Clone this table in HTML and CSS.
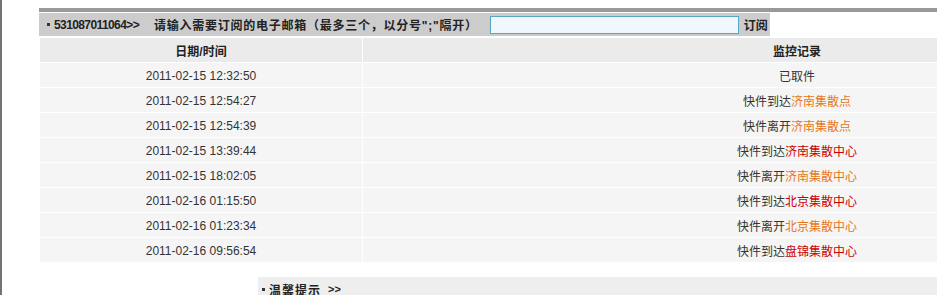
FILE: index.html
```html
<!DOCTYPE html>
<html lang="zh-CN">
<head>
    <meta charset="UTF-8">
    <title>快件跟踪</title>
    <link rel="stylesheet" href="styles.css">
</head>
<body>
    <div class="page">
        <div class="top-line"></div>

        <div class="subscribe">
            <span class="dot"></span>
            <span class="bill-no">531087011064&gt;&gt;</span>
            <span class="prompt">请输入需要订阅的电子邮箱（最多三个，以分号";"隔开）</span>
            <input type="text" class="mail-input">
            <span class="subscribe-btn">订阅</span>
        </div>

        <table class="track">
            <thead>
                <tr>
                    <th class="col-time">日期/时间</th>
                    <th class="col-log">监控记录</th>
                </tr>
            </thead>
            <tbody>
                <tr><td>2011-02-15 12:32:50</td><td>已取件</td></tr>
                <tr><td>2011-02-15 12:54:27</td><td>快件到达<span class="site">济南集散点</span></td></tr>
                <tr><td>2011-02-15 12:54:39</td><td>快件离开<span class="site">济南集散点</span></td></tr>
                <tr><td>2011-02-15 13:39:44</td><td>快件到达<span class="hub">济南集散中心</span></td></tr>
                <tr><td>2011-02-15 18:02:05</td><td>快件离开<span class="site">济南集散中心</span></td></tr>
                <tr><td>2011-02-16 01:15:50</td><td>快件到达<span class="hub">北京集散中心</span></td></tr>
                <tr><td>2011-02-16 01:23:34</td><td>快件离开<span class="site">北京集散中心</span></td></tr>
                <tr><td>2011-02-16 09:56:54</td><td>快件到达<span class="hub">盘锦集散中心</span></td></tr>
            </tbody>
        </table>

        <div class="tips">
            <span class="dot"></span>
            <span class="tips-title">温馨提示</span>
            <span class="tips-arrow">&gt;&gt;</span>
        </div>
    </div>
</body>
</html>
```

FILE: styles.css
```css
html, body {
    margin: 0;
    padding: 0;
    overflow: hidden;
    background: #fff;
}

body {
    font-family: "Liberation Sans", "Noto Sans CJK SC", sans-serif;
    font-size: 12px;
    color: #333;
}

.page {
    border-left: 2px solid #737373;
    height: 100vh;
    padding: 8px 0 0 37px;
    box-sizing: border-box;
    width: 1300px;
}

.top-line {
    height: 4px;
    background-color: #999;
    margin-bottom: 1px;
}

.dot {
    display: inline-block;
    width: 3px;
    height: 3px;
    background-color: #333;
}

/* subscription bar */
.subscribe {
    display: inline-flex;
    align-items: center;
    height: 23px;
    padding: 0 2px 0 8px;
    background-color: #ccc;
    font-weight: bold;
    color: #222;
    vertical-align: top;
}

.subscribe .dot {
    margin-right: 4px;
}

.bill-no {
    font-size: 12px;
    letter-spacing: -0.6px;
}

.prompt {
    margin-left: 15px;
    letter-spacing: 0.75px;
    white-space: nowrap;
}

.mail-input {
    margin: 0 0 0 12px;
    width: 249px;
    height: 18px;
    box-sizing: border-box;
    border: 1px solid #5aa5c6;
    background-color: #f0f8fd;
    padding: 0 3px;
    outline: none;
}

.subscribe-btn {
    margin-left: 5px;
}

/* tracking table */
.track {
    margin-top: 1px;
    table-layout: fixed;
    width: 1193px;
    border-collapse: separate;
    border-spacing: 1px;
}

.track th,
.track td {
    height: 24px;
    padding: 1px 0 0;
    box-sizing: border-box;
    text-align: center;
    vertical-align: middle;
}

.track th {
    background-color: #ebebeb;
    color: #222;
    font-weight: bold;
}

.track td {
    background-color: #f5f5f5;
}

.col-time {
    width: 322px;
}

.site {
    color: #e8761a;
}

.hub {
    color: #cc0000;
}

/* tips bar */
.tips {
    margin: 14px 0 0 219px;
    height: 24px;
    padding-left: 4px;
    display: flex;
    align-items: center;
    background-color: #eee;
    font-weight: bold;
    color: #222;
}

.tips .dot {
    margin-right: 4px;
}

.tips-title {
    font-size: 12px;
    letter-spacing: 1px;
}

.tips-arrow {
    margin-left: 7px;
    font-size: 11px;
}
```
